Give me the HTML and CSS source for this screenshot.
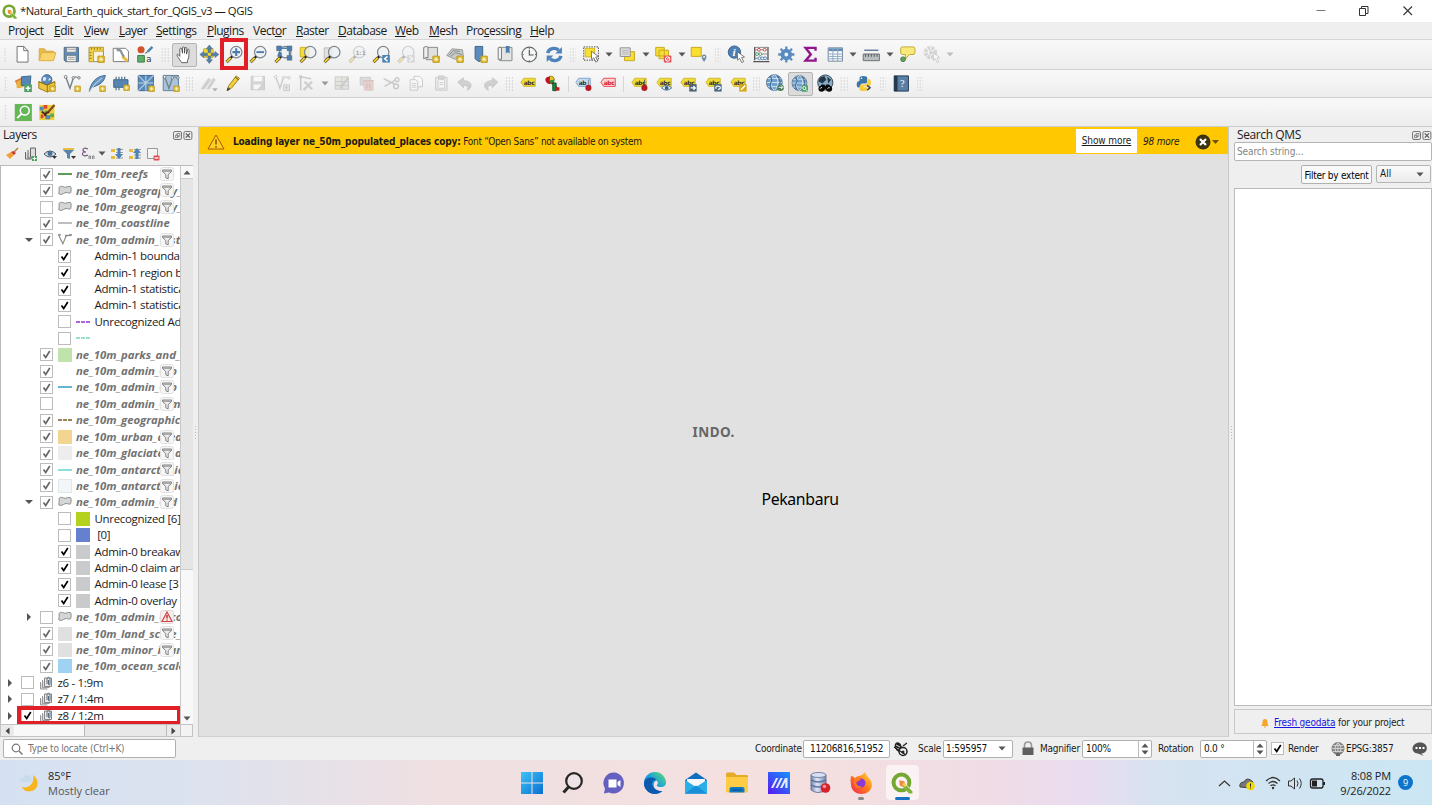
FILE: index.html
```html
<!DOCTYPE html>
<html lang="en">
<head>
<meta charset="utf-8">
<title>*Natural_Earth_quick_start_for_QGIS_v3 — QGIS</title>
<link rel="stylesheet" href="styles.css">
</head>
<body>
<svg class="defs" width="0" height="0">
<defs>
<linearGradient id="gBlue" x1="0" y1="0" x2="1" y2="1"><stop offset="0" stop-color="#3dc3f7"/><stop offset="1" stop-color="#0a6fd0"/></linearGradient>
<linearGradient id="gEdge" x1="0" y1="1" x2="1" y2="0"><stop offset="0" stop-color="#0c4fa8"/><stop offset=".5" stop-color="#1b9de2"/><stop offset="1" stop-color="#5fe06a"/></linearGradient>
<linearGradient id="gAsus" x1="0" y1="1" x2="1" y2="0"><stop offset="0" stop-color="#5a18f0"/><stop offset="1" stop-color="#1494ff"/></linearGradient>
<linearGradient id="gFox" x1="1" y1="0" x2="0" y2="1"><stop offset="0" stop-color="#ffe03a"/><stop offset=".5" stop-color="#ff7a1a"/><stop offset="1" stop-color="#f0205a"/></linearGradient>
<linearGradient id="gDb" x1="0" y1="0" x2="1" y2="0"><stop offset="0" stop-color="#7888ae"/><stop offset=".4" stop-color="#dfe7f7"/><stop offset="1" stop-color="#7484ac"/></linearGradient>
</defs>
<symbol id="star" viewBox="0 0 8 8"><rect x=".4" y=".4" width="7.2" height="7.2" rx="1" fill="#d6b025" stroke="#b8941c" stroke-width=".8"/><path d="M4 1.5v5M1.5 4h5M2.3 2.3l3.4 3.4M5.7 2.3 2.3 5.7" stroke="#fff6c2" stroke-width=".9"/></symbol>
<symbol id="mag" viewBox="0 0 20 20"><circle cx="12" cy="7.5" r="6" fill="#eef2f6" fill-opacity=".75" stroke="#7f878e" stroke-width="1.3"/><path d="M7.8 12 5.8 14" stroke="#222" stroke-width="2.4"/><path d="m6.2 13.500-4.400 4.500" stroke="#5b4a10" stroke-width="3.200"/><path d="m6.200 13.500-4.100 4.200" stroke="#f1ce3c" stroke-width="2"/></symbol>
<symbol id="tag" viewBox="0 0 20 20"><path d="M2 9 5 4.600h12.500v8.800H5z" fill="#f1dc36" stroke="#c5ac22" stroke-width=".8"/><text x="5" y="11.400" class="abc">abc</text></symbol>
<symbol id="globe" viewBox="0 0 20 20"><circle cx="9" cy="9" r="8.300" fill="#6f9fcb" stroke="#5a748c"/><path d="M9 .7C4 5 4 13 9 17.300M9 .7c5 4.300 5 12.300 0 16.600M1 9h16M2.300 4.700h13.400M2.300 13.300h13.400" fill="none" stroke="#dfe9f2" stroke-width=".9"/><path d="M4.500 3c2 1 2 4 .5 7s1 5 1 6M12 2c3 3 4 8 1 14" fill="none" stroke="#3c6d9e" stroke-width="1.200"/></symbol>
<symbol id="funnel" viewBox="0 0 14 14"><rect x=".5" y=".5" width="13" height="13" rx="2" fill="#f6f6f6" stroke="#e2e2e2"/><path d="M2.500 3h9v1.500L8.200 7.500v4.300l-2.400-1V7.500L2.500 4.500z" fill="#eee" stroke="#777" stroke-width=".9"/><path d="M3 4.200h8" stroke="#888"/></symbol>
<symbol id="poly" viewBox="0 0 16 14"><path d="M1 4c0-3 3-3 6-1.500C9 3.500 12 .5 14.500 2c1 1 .8 5 0 7-1.500 1.500-4-1-6.500 0-2 1-5 3-7 1.500C0 9 2 6.500 1 4z" fill="#d5d7d7" stroke="#7b7e80"/></symbol>
<symbol id="group" viewBox="0 0 14 14"><path d="M1.500 6v7h7M3.500 4v7.500h7" fill="#ddd" stroke="#999"/><path d="M5.500 2h7v8.500h-7z" fill="#e9e9e9" stroke="#858585"/><path d="M8 8V3.500c0-3 3-3 3 0V8c0 1.500-1.500 1.500-1.500 0V4" fill="none" stroke="#576b80"/></symbol>
<symbol id="check" viewBox="0 0 13 13"><path d="m3.500 6.500 2.200 3L9.800 3" fill="none" stroke="currentColor" stroke-width="1.700"/></symbol>
<symbol id="dockb" viewBox="0 0 20 9"><rect x=".5" y=".5" width="8" height="8" rx="1.500" fill="#eee" stroke="#777"/><path d="M4 2.500h2.800v2.800H4zM2.500 4.200h2.700v2.500H2.500z" fill="#eee" stroke="#777" stroke-width=".8"/><rect x="10.900" y=".5" width="8" height="8" rx="1.500" fill="#eee" stroke="#777"/><path d="m12.800 2.400 4.200 4.200m0-4.200-4.200 4.200" stroke="#555" stroke-width="1.200"/></symbol>
<symbol id="qgis" viewBox="0 0 20 20"><circle cx="9.500" cy="9.500" r="7.200" fill="none" stroke="#74a832" stroke-width="3.600"/><path d="m10.500 13 2.500-2.500 7 7-2.500 2.500z" fill="#fff"/><path d="m12 10.500 7.500 7v2h-3.200L10.500 13z" fill="#7eb238"/><path d="m7.500 7.500 4.500.8 1 2.700-2.500 2.500-2.500-1z" fill="#ef8a3d"/><path d="m11 10.500 2.500 2.500" stroke="#f4d04b" stroke-width="2.400"/></symbol>
<symbol id="cursor" viewBox="0 0 10 12"><path d="m1 0 .3 9 2.200-2 2.200 4.500 2-1L5.600 6.200l3-.5z" fill="#fff" stroke="#555" stroke-width=".8"/></symbol>
<symbol id="down" viewBox="0 0 8 5"><path d="M.5.5h7L4 4.500z" fill="currentColor"/></symbol>
<symbol id="vee" viewBox="0 0 20 20"><path d="m3 3 4.500 12L11 4.500q2-3 6 0" fill="none" stroke="#77838e" stroke-width="1.500"/><circle cx="3" cy="3" r="1.500" fill="#fff" stroke="#777"/><circle cx="11" cy="4" r="1.300" fill="#fff" stroke="#777"/><circle cx="17" cy="4" r="1.300" fill="#fff" stroke="#777"/></symbol>
</svg>

<header class="titlebar">
  <svg class="logo" viewBox="0 0 20 20"><use href="#qgis"/></svg>
  <span class="title">*Natural_Earth_quick_start_for_QGIS_v3 — QGIS</span>
  <svg class="winbtns" viewBox="0 0 108 16"><path d="M4.500 7.500h9" stroke="#777"/><path d="M47.500 5.500h6v7h-6zM49.500 5.500v-2h6.500v7h-2.500" fill="none" stroke="#333"/><path d="m91.500 3.500 8.500 8.500m0-8.500L91.500 12" stroke="#333" stroke-width="1.100"/></svg>
</header>

<nav class="menu">
  <span class="m1">Pro<u>j</u>ect</span><span class="m2"><u>E</u>dit</span><span class="m3"><u>V</u>iew</span><span class="m4"><u>L</u>ayer</span><span class="m5"><u>S</u>ettings</span><span class="m6"><u>P</u>lugins</span><span class="m7">Vect<u>o</u>r</span><span class="m8"><u>R</u>aster</span><span class="m9"><u>D</u>atabase</span><span class="m10"><u>W</u>eb</span><span class="m11"><u>M</u>esh</span><span class="m12">Pro<u>c</u>essing</span><span class="m13"><u>H</u>elp</span>
</nav>

<div class="toolbar bar1">
  <i class="grip g10"></i>
  <svg class="t" viewBox="0 0 20 20"><path d="M4.500 1.500h7l4.500 4.500v12H4.500z" fill="#fff" stroke="#6e6e6e"/><path d="M11.500 1.500V6H16" fill="none" stroke="#6e6e6e"/></svg>
  <svg class="t" viewBox="0 0 20 20"><path d="M1.500 16V4h5.500l2 2.500h7.500V9" fill="#e8bb4b" stroke="#d9a93c"/><path d="M1.500 16.500 4 8h15l-2.500 8.500z" fill="#f8d46b" stroke="#dcae3f"/></svg>
  <svg class="t" viewBox="0 0 20 20"><path d="M2.500 2.500h15v15H4l-1.500-1.500z" fill="#5e8cb8" stroke="#44698c"/><path d="M5 2.500h10v5H5zM5 11h10v6.500H5z" fill="#f3f3f3" stroke="#777" stroke-width=".8"/><path d="M6.500 13h7m-7 2h7M6 4.500h8" stroke="#999"/></svg>
  <svg class="t" viewBox="0 0 20 20"><path d="M2.500 2.500h15v15h-15z" fill="#f6f2df" stroke="#888"/><path d="M2.500 2.500h15v4H7v11H2.500z" fill="#f4d44b" stroke="#c7a22a"/><path d="M5 3v2m3-2v2m3-2v2m3-2v2M3 8h2m-2 3h2m-2 3h2" stroke="#8d7420"/><use href="#star" x="11" y="11" width="8" height="8"/></svg>
  <svg class="t" viewBox="0 0 20 20"><path d="M1.500 3.500h13l3 3v11h-16z" fill="#fff" stroke="#777"/><path d="m11 12 5.500 5" stroke="#e9bd43" stroke-width="3"/><path d="M5 5.500q4-1 5 2t3 5" fill="none" stroke="#8c969e" stroke-width="2.400"/></svg>
  <svg class="t" viewBox="0 0 20 20"><circle cx="5.500" cy="5" r="3.700" fill="#d3532f"/><path d="m12.500 7 5-5" stroke="#4e85b3" stroke-width="2.600"/><path d="M9.500 9.500q1-3.500 3.500-2.500Z" fill="#333"/><path d="M2 11h7v7H2z" fill="#5cae68" stroke="#3f7b48"/><text x="11" y="17.500" class="smalla">a</text></svg>
  <i class="grip g14"></i>
  <svg class="t on" viewBox="0 0 20 20"><path d="M7 18.500 3 12.500c-1-1.500-2-4 0-3l2 2V3.500c0-1.500 2-1.500 2.200 0L8 8V2c0-1.500 2-1.500 2.200 0v6l.6-5.500c.2-1.500 2-1.200 2 .2L12.500 9l1-4.500c.4-1.300 2-1 1.800.5-.5 5 .5 7-1.800 11v2.500z" fill="#fff" stroke="#444" stroke-width=".9"/></svg>
  <svg class="t" viewBox="0 0 20 20"><path d="M4 4h10v9H4z" fill="#f3d937" stroke="#caae25"/><path d="m10 0 3.200 4h-1.800v4h-2.800V4H6.800zm0 19.500L6.800 15.500h1.800v-4h2.800v4h1.800zM0 10l4-3.200v1.800h4v2.800H4v1.800zm20 0-4 3.200v-1.800h-4V8.600h4V6.800z" fill="#5480aa" stroke="#3b5f80" stroke-width=".5"/></svg>
  <span class="tw"><svg class="t" viewBox="0 0 20 20"><use href="#mag"/><path d="M12 3.500v8M8 7.500h8" stroke="#4c7cae" stroke-width="2.200"/></svg><b class="mark"></b></span>
  <svg class="t" viewBox="0 0 20 20"><use href="#mag"/><path d="M8 7.500h8" stroke="#4c7cae" stroke-width="2"/></svg>
  <svg class="t" viewBox="0 0 20 20"><use href="#mag"/><path d="M3 1h5v5H3zM14 1h5v5h-5zM14 11h5v5h-5zM5 8h3v4H4z" fill="#4d7eac" stroke="#375f84" stroke-width=".5"/><path d="M8 3.500h6M16.500 5v7" stroke="#4d7eac" stroke-width="1.500"/></svg>
  <svg class="t" viewBox="0 0 20 20"><path d="M1.500 2.500h9v10h-9z" fill="#f4dc31" stroke="#cbb020"/><use href="#mag"/></svg>
  <svg class="t" viewBox="0 0 20 20"><path d="M1.500 3h8v11h-8z" fill="#e2e2e2" stroke="#bbb"/><use href="#mag"/></svg>
  <svg class="t off" viewBox="0 0 20 20"><use href="#mag"/><text x="8" y="10.500" class="tiny">1:1</text></svg>
  <svg class="t" viewBox="0 0 20 20"><use href="#mag"/><path d="M11 10.500h8v8h-8z" fill="#4e83b5"/><path d="m16.500 12-3 2.500 3 2.500" fill="none" stroke="#fff" stroke-width="1.500"/></svg>
  <svg class="t off" viewBox="0 0 20 20"><use href="#mag"/><path d="M11 10.500h8v8h-8z" fill="#aaa"/><path d="m13.500 12 3 2.500-3 2.500" fill="none" stroke="#fff" stroke-width="1.500"/></svg>
  <svg class="t" viewBox="0 0 20 20"><path d="M4.500 2.500h12v13h-12z" fill="#dfe0e0" stroke="#858989"/><path d="M2 2.500q3-2 4.500 0v11q-2.500-1-4.500 1z" fill="#f0f0f0" stroke="#777"/><use href="#star" x="11" y="11" width="8" height="8"/></svg>
  <svg class="t" viewBox="0 0 20 20"><path d="M1 11 6.500 4l11 1 1 7-9 3z" fill="#c7caca" stroke="#999"/><path d="m3 11 5-5 7 .7M5 12l5-4 7 2" stroke="#858989" fill="none"/><use href="#star" x="11" y="11" width="8" height="8"/></svg>
  <svg class="t" viewBox="0 0 20 20"><path d="M4.500 1.500h8v14l-4 2-4-3z" fill="#5a8dbd" stroke="#3b6288"/><use href="#star" x="10" y="11" width="8" height="8"/></svg>
  <svg class="t" viewBox="0 0 20 20"><path d="M4 2.500h13v14H4z" fill="#e3e4e4" stroke="#858989"/><path d="M2.500 3q2-1.500 3.500 0v12H2.500z" fill="#f2f2f2" stroke="#777"/><path d="M10.500 1h4v8l-2-1.500-2 1.500z" fill="#4f7fae"/></svg>
  <svg class="t" viewBox="0 0 20 20"><circle cx="10" cy="10" r="7.700" fill="#f6f7f7" stroke="#676c70" stroke-width="1.200"/><path d="M10 5v5.500h4.500M10 3v1m0 12v1M3 10h1m12 0h1" fill="none" stroke="#555" stroke-width="1.200"/></svg>
  <svg class="t" viewBox="0 0 20 20"><path d="M3 8.500C4 3.500 11 2 14.500 5.500" fill="none" stroke="#4c83bc" stroke-width="3.500"/><path d="M18 2v7h-7zM2 18v-7h7z" fill="#4c83bc"/><path d="M17 11.500C16 16.500 9 18 5.500 14.500" fill="none" stroke="#4c83bc" stroke-width="3.500"/></svg>
  <i class="grip g12"></i>
  <svg class="t" viewBox="0 0 20 20"><path d="M2 2h15.500v14H2z" fill="none" stroke="#444" stroke-dasharray="1.500 1.200"/><path d="M3.500 3.500h10v9h-10z" fill="#f9df2e" stroke="#d0b41c"/><use href="#cursor" x="9" y="6" width="10" height="13"/></svg>
  <svg class="d" viewBox="0 0 8 5"><use href="#down"/></svg>
  <svg class="t" viewBox="0 0 20 20"><path d="M7 7h10.500v9.500H7z" fill="#f7dd36" stroke="#c6a71c"/><path d="M2.500 3h10.500v9H2.500z" fill="#e9e9e9" stroke="#888"/><path d="M4 5.500h7.500M4 7.500h7.500M4 9.500h7.500" stroke="#aaa"/></svg>
  <svg class="d" viewBox="0 0 8 5"><use href="#down"/></svg>
  <svg class="t" viewBox="0 0 20 20"><path d="M2 2.500h9v9H2zM5.500 5.500h10v9h-10z" fill="#f7dd36" stroke="#c6a71c"/><rect x="10.500" y="11" width="8" height="7.500" rx="1" fill="#e2535c"/><circle cx="14.500" cy="14.700" r="2.300" fill="none" stroke="#fff"/><path d="m13 16.500 3-3.600" stroke="#fff"/></svg>
  <svg class="d" viewBox="0 0 8 5"><use href="#down"/></svg>
  <svg class="t" viewBox="0 0 20 20"><path d="M1.500 2.500h10.500v9.500H1.500z" fill="#f9df2e" stroke="#c6a71c"/><path d="M15 18c-2-3.500-2.500-4-2.500-5.500a2.500 2.500 0 0 1 5 0c0 1.500-.5 2-2.500 5.500z" fill="#6f8ea8"/><circle cx="15" cy="12.500" r="1" fill="#fff"/></svg>
  <i class="grip g12"></i>
  <svg class="t" viewBox="0 0 20 20"><circle cx="8" cy="7.500" r="6.500" fill="#4f7fb3" stroke="#3c648e"/><text x="6" y="12" class="info">i</text><use href="#cursor" x="10" y="7" width="10" height="12"/></svg>
  <svg class="t" viewBox="0 0 20 20"><path d="M3 2v14M17 2v14M1.500 17.500h17" stroke="#555" stroke-width="1.400"/><path d="M3 2.500h14M3 5h14M3 9.500h14M3 14h14" stroke="#888"/><g fill="#fff"><circle cx="7.500" cy="5" r="1.500" stroke="#c54444"/><circle cx="13.500" cy="5" r="1.500" stroke="#c54444"/><circle cx="5.500" cy="9.500" r="1.500" stroke="#4d9a65"/><circle cx="9" cy="9.500" r="1.500" stroke="#4d9a65"/><circle cx="8" cy="14" r="1.500" stroke="#5481ad"/><circle cx="11" cy="14" r="1.500" stroke="#5481ad"/><circle cx="14" cy="14" r="1.500" stroke="#5481ad"/></g></svg>
  <svg class="t" viewBox="0 0 20 20"><circle cx="10" cy="10" r="4" fill="none" stroke="#578bc0" stroke-width="4"/><path d="M10 1.500v3M10 15.500v3M1.500 10h3M15.500 10h3M4 4l2 2M14 14l2 2M16 4l-2 2M4 16l2-2" stroke="#578bc0" stroke-width="2.400"/></svg>
  <svg class="t" viewBox="0 0 20 20"><path d="M15.500 6V3H5l5.500 7L5 16.500h10.500v-3" fill="none" stroke="#8f168f" stroke-width="2.500"/></svg>
  <svg class="t" viewBox="0 0 20 20"><path d="M2.500 3h15v14h-15z" fill="#fff" stroke="#6c8198"/><path d="M3 3.500h14v3H3z" fill="#608db9"/><path d="M2.500 9.500h15M2.500 12h15M2.500 14.500h15M7.500 3v14M12.500 3v14" stroke="#8aa6c1"/></svg>
  <svg class="d" viewBox="0 0 8 5"><use href="#down"/></svg>
  <svg class="t" viewBox="0 0 20 20"><path d="M2.500 5.500h15" stroke="#49698e" stroke-width="1.300"/><path d="M1.500 9.500h17v7h-17z" fill="#b9bec1" stroke="#686e73"/><path d="M4 9.500v3m3-3v3m3-3v3m3-3v3m3-3v3" stroke="#555"/></svg>
  <svg class="d" viewBox="0 0 8 5"><use href="#down"/></svg>
  <svg class="t" viewBox="0 0 20 20"><path d="M5 2h11q2 0 2 2v4q0 2-2 2h-4l-4 5V10H5Q3 10 3 8V4q0-2 2-2z" fill="#f8ea7a" stroke="#bfa536"/><circle cx="5.500" cy="15" r="2.500" fill="#65a45d" stroke="#447d44"/></svg>
  <svg class="t off" viewBox="0 0 20 20"><circle cx="8" cy="8" r="5" fill="none" stroke="#999" stroke-width="4" stroke-dasharray="3 1"/><path d="m7 5 4 3-4 3z" fill="#888"/><use href="#cursor" x="10" y="8" width="9" height="11"/></svg>
  <svg class="d off" viewBox="0 0 8 5"><use href="#down"/></svg>
</div>

<div class="toolbar bar2">
  <i class="grip g11"></i>
  <svg class="t" viewBox="0 0 20 20"><path d="m1 7 7-3 4 8-7 3z" fill="#dd7b3b"/><path d="m3 8 7-3v9l-7 1z" fill="#e8b33a"/><path d="m8 3 10-1-1 11-9-1z" fill="#5487b8" stroke="#3f678c"/><path d="M11 11h8v8h-8z" fill="#4fa064"/><path d="M15 12.500v5M12.500 15h5" stroke="#fff" stroke-width="1.500"/></svg>
  <svg class="t" viewBox="0 0 20 20"><path d="m1 8 9 3.500 8-3.500v6.500l-8 4.500-9-4z" fill="#edc53e" stroke="#9f7c19"/><circle cx="9.500" cy="6" r="5.300" fill="#5a8cbd" stroke="#37618b"/><path d="m6 3 3 1-1 3-3 0zm6 1 2 2-3 1z" fill="#e7edf1"/><path d="m1 8 9 3.500V19M18 8l-8 3.500" fill="none" stroke="#94720f"/><use href="#star" x="12" y="12" width="7" height="7"/></svg>
  <svg class="t" viewBox="0 0 20 20"><use href="#vee"/><use href="#star" x="12" y="12" width="7" height="7"/></svg>
  <svg class="t" viewBox="0 0 20 20"><path d="M1.500 18.500C3 9 9 2 18.500 1.500 17 8 14 11 4.500 14z" fill="#6595c1" stroke="#416d96"/><path d="M1.500 18.500Q7 10 15 4" stroke="#d9e4ed" fill="none"/><use href="#star" x="12" y="12" width="7" height="7"/></svg>
  <svg class="t" viewBox="0 0 20 20"><path d="M2 6h15v8H2z" fill="#5384b2" stroke="#3d6489"/><path d="M4.500 6V3m3 3V3m3 3V3m3 3V3m-9 11v3m3-3v3" stroke="#55718b" stroke-width="1.300"/><use href="#star" x="12" y="11" width="7" height="7"/></svg>
  <svg class="t" viewBox="0 0 20 20"><path d="M1.500 1.500h16v16h-16z" fill="#588bbc" stroke="#3f678f"/><path d="M9.500 1.500v16M1.500 9.500h16M1.500 1.500l8 8M9.500 9.500l8-8M1.500 17.500l8-8" stroke="#bfd3e4" stroke-width="1.100"/><use href="#star" x="12" y="12" width="7" height="7"/></svg>
  <svg class="t" viewBox="0 0 20 20"><path d="M1.500 1.500h16v16h-16z" fill="#a9c5dd" stroke="#5d7f9d"/><use href="#vee"/><use href="#star" x="12" y="12" width="7" height="7"/></svg>
  <i class="grip g13"></i>
  <svg class="t off" viewBox="0 0 20 20"><path d="M2 16 10 4l3 2-7 10zM8 16l7-12 3 2-7 10z" fill="#888"/><path d="M14 15h6l-3 3.500z" fill="#333"/></svg>
  <svg class="t" viewBox="0 0 20 20"><path d="m3.500 17.500 1.500-5L13 2l3.500 2.500-8.500 10.500z" fill="#f2cf38" stroke="#9e8025"/><path d="m12 3.500 3.500 2.500M3.500 17.500l1-3 1.700 1.200z" stroke="#444" fill="#444"/></svg>
  <svg class="t off" viewBox="0 0 20 20"><path d="M2.500 2.500h14v14h-14z" fill="#999" stroke="#777"/><path d="M5 2.500h9v5H5zM5 11h8v5H5z" fill="#fff"/><path d="m10 17 6-7" stroke="#888" stroke-width="2"/></svg>
  <svg class="t off" viewBox="0 0 20 20"><use href="#vee"/><path d="M11.500 11.500h6v6h-6z" fill="#ddd" stroke="#777"/><path d="M14.500 12.500v4m-2-2h4" stroke="#777"/></svg>
  <svg class="t off" viewBox="0 0 20 20"><path d="M3 17V3l11 2" fill="none" stroke="#777" stroke-width="1.500"/><path d="M1.500 1.500h3v3h-3z" fill="#777"/><path d="m6 17 9-9M7 8l8 8" stroke="#888" stroke-width="2.400"/></svg>
  <svg class="d mid" viewBox="0 0 8 5"><use href="#down"/></svg>
  <svg class="t off" viewBox="0 0 20 20"><path d="M2.500 3h14v13h-14z" fill="#c9c9b9" stroke="#777"/><path d="M2.500 8h14m-14 4h14m-7-9v13" stroke="#777"/><path d="m8 15 8-11" stroke="#777" stroke-width="2"/></svg>
  <svg class="t off" viewBox="0 0 20 20"><path d="M2.500 3.500h11v8h-11z" fill="#aaa" stroke="#777"/><path d="M6 8h10v9H7z" fill="#d88" stroke="#a77"/><path d="M5 7h12M9.500 10v5m3-5v5" stroke="#966" stroke-width="1.500"/></svg>
  <svg class="t off" viewBox="0 0 20 20"><path d="m2 5 12 6M3 13l12-7" stroke="#777" stroke-width="1.600"/><circle cx="15" cy="13" r="2.500" fill="none" stroke="#777" stroke-width="1.500"/><circle cx="16" cy="6" r="2" fill="none" stroke="#777" stroke-width="1.500"/></svg>
  <svg class="t off" viewBox="0 0 20 20"><path d="M7.500 2.500h6l3 3v8h-9z" fill="#fff" stroke="#777"/><path d="M3.500 6h6l2 2v9h-8z" fill="#fff" stroke="#777"/><path d="M5 10h5m-5 2h5m-5 2h5" stroke="#888"/></svg>
  <svg class="t off" viewBox="0 0 20 20"><path d="M4 3.500h12v13.500H4z" fill="#ddd" stroke="#777"/><path d="M6.500 6h7v9h-7z" fill="#fff" stroke="#888"/><path d="M7 2h6v3H7zM8 9h4m-4 2h4" fill="#999" stroke="#777"/></svg>
  <svg class="t off" viewBox="0 0 20 20"><path d="M2 8.500 8 4v3c10 0 10 8 4 10 2-4 0-5-4-5v2.500z" fill="#888" stroke="#777"/></svg>
  <svg class="t off" viewBox="0 0 20 20"><path d="M18 8.500 12 4v3C2 7 2 15 8 17c-2-4 0-5 4-5v2.500z" fill="#888" stroke="#777"/></svg>
  <i class="grip g13"></i>
  <svg class="t up" viewBox="0 0 20 20"><use href="#tag"/></svg>
  <svg class="t" viewBox="0 0 20 20"><path d="M7 7V2.500q5-1 5 4Z" fill="#e7c52d" stroke="#8f7b18"/><path d="M2.500 6q1-4 5-3L7 7l3 3q-6 2-7.500-4z" fill="#c1121d"/><path d="m7 7 5-1q1 4-3 5z" fill="#1e9b3d"/><path d="m10 9 5 6" stroke="#a11" stroke-width="2"/><path d="M10.500 9.500h3.500v8h-3.500z" fill="#15883a" stroke="#0c5425"/><path d="M14 14h3.500v3.500H14z" fill="#bc1921"/></svg>
  <i class="sep"></i>
  <svg class="t up" viewBox="0 0 20 20"><path d="M2 9 5 4.600h12.500v8.800H5z" fill="#c5dbf1" stroke="#78a2cd"/><text x="5" y="11.400" class="abc">ab</text><path d="M15.500 6v7" stroke="#888"/><circle cx="15.500" cy="15" r="3.300" fill="#b51c28"/></svg>
  <svg class="t up" viewBox="0 0 20 20"><path d="M2 9 5 4.600h12.500v8.800H5z" fill="#ffd2d2" stroke="#e6434c"/><text x="5" y="11.400" class="abc red">abc</text></svg>
  <i class="sep"></i>
  <svg class="t up" viewBox="0 0 20 20"><use href="#tag"/><path d="M15.500 6v7" stroke="#555"/><circle cx="15.500" cy="15" r="3.300" fill="#b51c28"/></svg>
  <svg class="t up" viewBox="0 0 20 20"><use href="#tag"/><path d="M7 15q5-5.500 11 0-6 5-11 0z" fill="#eaf1f8" stroke="#446b91"/><circle cx="12.500" cy="15" r="2" fill="#355b82"/></svg>
  <svg class="t up" viewBox="0 0 20 20"><use href="#tag"/><path d="M11 11h8v8h-8z" fill="#4d6472"/><path d="M12.500 15h5m-2-2 2 2-2 2" stroke="#fff" fill="none" stroke-width="1.400"/></svg>
  <svg class="t up" viewBox="0 0 20 20"><use href="#tag"/><path d="M11 11h8v8h-8z" fill="#4d6880"/><path d="M13 16q-1-3 2-3 3 0 2.500 2.500L15 17" fill="none" stroke="#fff" stroke-width="1.300"/></svg>
  <svg class="t up" viewBox="0 0 20 20"><use href="#tag"/><path d="M11 11h8v8h-8z" fill="#d6a918"/><path d="m13 17 4.500-4.500" stroke="#fff" stroke-width="1.700"/></svg>
  <i class="grip g13"></i>
  <svg class="t" viewBox="0 0 20 20"><use href="#globe"/><circle cx="15.500" cy="14.500" r="3.500" fill="#487c58"/><path d="M13.500 14h4m-1.500-2 2 2-2 2" fill="none" stroke="#fff"/></svg>
  <svg class="t on" viewBox="0 0 20 20"><use href="#globe"/><rect x="11.500" y="11.500" width="7" height="7" rx="1" fill="#4ca06a"/><circle cx="14.500" cy="14.500" r="1.700" fill="none" stroke="#fff"/><path d="m16 16 2 2" stroke="#fff"/></svg>
  <svg class="t" viewBox="0 0 20 20"><circle cx="10" cy="9" r="8" fill="#87adc9" stroke="#345"/><path d="m4 4 5-2 2 4-4 4-4-2zM12 3l4 3-3 4z" fill="#253746"/><path d="m3 16 3-5h3l1 2 1-2h3l3 5z" fill="#080808"/><circle cx="6" cy="15.500" r="3.200" fill="#080808"/><circle cx="14" cy="15.500" r="3.200" fill="#080808"/><path d="M4.500 15.500q1-2 2-1m6 1q1-2 2-1" stroke="#fff" fill="none"/></svg>
  <i class="grip g14"></i>
  <svg class="t" viewBox="0 0 20 20"><path d="M4 9V8h6V7H5q-3 0-3 4t3 3h1v-2q0-2 2-2h3q2 0 2-2V4q0-2-4-2T5 4v3" fill="#3c75a8"/><path d="M15 6h1q2 1 2 4 0 4-3 4h-5v1h4v2q0 2-4 2t-4-2v-3q0-2 2-2h4q2 0 2-2z" fill="#f7cc3c" transform="translate(-1 -1)"/><circle cx="7" cy="4.500" r=".8" fill="#fff"/><path d="m13 12 3 2.500-3 2.500" fill="none" stroke="#444" stroke-width="1.600"/></svg>
  <i class="grip g12"></i>
  <svg class="t" viewBox="0 0 20 20"><path d="M2.500 2h15v16h-15z" fill="#587fa6" stroke="#243a4f"/><path d="M2.500 2H6v16H2.500z" fill="#26384a"/><text x="8.700" y="14" class="help">?</text></svg>
  <i class="grip g12"></i>
</div>

<div class="toolbar bar3">
  <i class="grip g11"></i>
  <svg class="t" viewBox="0 0 20 20"><path d="M1 1h18v18H1z" fill="#65b657"/><circle cx="11.500" cy="8" r="4.700" fill="none" stroke="#fff" stroke-width="1.600"/><path d="m8 11.500-4.500 4.500" stroke="#fff" stroke-width="2"/></svg>
  <svg class="t" viewBox="0 0 20 20"><path d="M1.500 2h16v16h-16z" fill="#f0cf3d"/><path d="M2 4h4v4H2zM8 13h5v4H8z" fill="#5585b5"/><path d="M6 2h4v4H6zM3 12h3v4H3z" fill="#d84b31"/><path d="M7 8h3v4H7zM13 11h4v4h-4z" fill="#5eaa54"/><path d="m17.500 2-7 8" stroke="#884714" stroke-width="2.400"/><path d="M4 9q4 2 4 5 0-5 4-4" fill="none" stroke="#4f2d18" stroke-width="2"/></svg>
</div>

<main class="work">
  <aside class="layers">
    <div class="dockhead"><span>Layers</span><svg class="dockbtns" viewBox="0 0 20 9"><use href="#dockb"/></svg></div>
    <div class="ltools">
      <svg viewBox="0 0 14 14"><path d="m1 8 5-3 3 3-4 4z" fill="#f0a038"/><path d="m6 5 3 3 2-2-3-2z" fill="#c33"/><path d="m9 5 4-4" stroke="#b67b37" stroke-width="1.500"/></svg>
      <svg viewBox="0 0 14 14"><path d="M1.500 5v7h6M4 3v8h5M6.500 1h5v9h-5z" fill="#ddd" stroke="#666"/><path d="M8 9h5v5H8z" fill="#4aa05d"/><path d="M10.500 9.500v4m-2-2h4" stroke="#fff"/></svg>
      <svg viewBox="0 0 14 14"><path d="M1 7q6-6 12 0-6 6-12 0z" fill="#dde6ed" stroke="#456"/><circle cx="7" cy="6.500" r="2.500" fill="#4b7298"/><path d="M9 9h5l-2.500 3z" fill="#333"/></svg>
      <svg viewBox="0 0 14 14"><path d="M1 1h11v2L8 7v5l-3-1V7L1 3z" fill="#5684ae"/><path d="M1 1h11v2H1z" fill="#e8bd3c"/><path d="M9 9h5l-2.500 3z" fill="#333"/></svg>
      <svg viewBox="0 0 14 14"><path d="M7 2Q2 0 2 3q0 2 3 2-4 0-3.500 2.500Q3 10 7 8" fill="none" stroke="#7b5588" stroke-width="1.200"/><path d="M8 12V9h1.500v3m2 0V9H13v3" fill="none" stroke="#888"/></svg>
      <svg class="lc" viewBox="0 0 8 5"><use href="#down"/></svg>
      <svg class="nr" viewBox="0 0 14 14"><path d="M1 2h4v3H1zM1 9h4v3H1z" fill="#e8bd3c"/><path d="M6 2.500h7M6 5.500h7M6 11h7" stroke="#999"/><path d="M7.500 1h3v6H13l-4 5-4-5h2.500z" fill="#4d83b5"/></svg>
      <svg class="nr" viewBox="0 0 14 14"><path d="M1 2h4v3H1zM1 9h4v3H1z" fill="#e8bd3c"/><path d="M6 2.500h7M6 8h7M6 11h7" stroke="#999"/><path d="M7.500 12h3V6H13L9 1 5 6h2.500z" fill="#4d83b5"/></svg>
      <svg viewBox="0 0 14 14"><path d="M1.500 1.500h10v10h-10z" fill="#f4f4f4" stroke="#999"/><rect x="7.500" y="8.500" width="6" height="5" rx="1" fill="#df4b53"/><path d="M8.500 11h4" stroke="#fff" stroke-width="1.300"/></svg>
    </div>
    <div class="treebox">
      <div class="tree">
        <div class="r l1"><i class="ar"></i><b class="cb g"><svg><use href="#check"/></svg></b><i class="ic"><i class="ln" style="background:#5e9a5a"></i></i><em>ne_10m_reefs</em><svg class="fu"><use href="#funnel"/></svg></div>
        <div class="r l1"><i class="ar"></i><b class="cb g"><svg><use href="#check"/></svg></b><i class="ic"><svg class="po"><use href="#poly"/></svg></i><em>ne_10m_geography_</em><svg class="fu"><use href="#funnel"/></svg></div>
        <div class="r l1"><i class="ar"></i><b class="cb g"></b><i class="ic"><svg class="po"><use href="#poly"/></svg></i><em>ne_10m_geography_</em><svg class="fu"><use href="#funnel"/></svg></div>
        <div class="r l1"><i class="ar"></i><b class="cb g"><svg><use href="#check"/></svg></b><i class="ic"><i class="ln" style="background:#bdbdbd"></i></i><em>ne_10m_coastline</em></div>
        <div class="r l1"><i class="ar open"></i><b class="cb g"><svg><use href="#check"/></svg></b><i class="ic"><svg class="po" viewBox="0 0 16 14"><path d="m1 2 4.500 9.500L9 3q1-2 5.500-1" fill="none" stroke="#888" stroke-width="1.300"/><path d="M0 1h3M8 2h2M13 1h3" stroke="#888" stroke-width="2"/></svg></i><em>ne_10m_admin_1_st</em><svg class="fu"><use href="#funnel"/></svg></div>
        <div class="r l2"><b class="cb"><svg><use href="#check"/></svg></b><i class="ic"></i><span>Admin-1 bounda</span></div>
        <div class="r l2"><b class="cb"><svg><use href="#check"/></svg></b><i class="ic"></i><span>Admin-1 region b</span></div>
        <div class="r l2"><b class="cb"><svg><use href="#check"/></svg></b><i class="ic"></i><span>Admin-1 statistica</span></div>
        <div class="r l2"><b class="cb"><svg><use href="#check"/></svg></b><i class="ic"></i><span>Admin-1 statistica</span></div>
        <div class="r l2"><b class="cb"></b><i class="ic"><i class="ds" style="color:#a652d6"></i></i><span>Unrecognized Ad</span></div>
        <div class="r l2"><b class="cb"></b><i class="ic"><i class="ds" style="color:#8fdcc4"></i></i></div>
        <div class="r l1"><i class="ar"></i><b class="cb g"><svg><use href="#check"/></svg></b><i class="ic"><i class="sw" style="background:#bfe3ab"></i></i><em>ne_10m_parks_and_</em></div>
        <div class="r l1"><i class="ar"></i><b class="cb g"><svg><use href="#check"/></svg></b><i class="ic"></i><em>ne_10m_admin_0_b</em><svg class="fu"><use href="#funnel"/></svg></div>
        <div class="r l1"><i class="ar"></i><b class="cb g"><svg><use href="#check"/></svg></b><i class="ic"><i class="ln" style="background:#62b5d6"></i></i><em>ne_10m_admin_0_b</em><svg class="fu"><use href="#funnel"/></svg></div>
        <div class="r l1"><i class="ar"></i><b class="cb g"></b><i class="ic"></i><em>ne_10m_admin_0_m</em><svg class="fu"><use href="#funnel"/></svg></div>
        <div class="r l1"><i class="ar"></i><b class="cb g"><svg><use href="#check"/></svg></b><i class="ic"><i class="ds" style="color:#8b7844"></i></i><em>ne_10m_geographic</em></div>
        <div class="r l1"><i class="ar"></i><b class="cb g"><svg><use href="#check"/></svg></b><i class="ic"><i class="sw" style="background:#f1d591"></i></i><em>ne_10m_urban_area</em><svg class="fu"><use href="#funnel"/></svg></div>
        <div class="r l1"><i class="ar"></i><b class="cb g"><svg><use href="#check"/></svg></b><i class="ic"><i class="sw" style="background:#ededed"></i></i><em>ne_10m_glaciated_a</em><svg class="fu"><use href="#funnel"/></svg></div>
        <div class="r l1"><i class="ar"></i><b class="cb g"><svg><use href="#check"/></svg></b><i class="ic"><i class="ln" style="background:#8adede"></i></i><em>ne_10m_antarctic_ic</em><svg class="fu"><use href="#funnel"/></svg></div>
        <div class="r l1"><i class="ar"></i><b class="cb g"><svg><use href="#check"/></svg></b><i class="ic"><i class="sw pale"></i></i><em>ne_10m_antarctic_ic</em><svg class="fu"><use href="#funnel"/></svg></div>
        <div class="r l1"><i class="ar open"></i><b class="cb g"><svg><use href="#check"/></svg></b><i class="ic"><svg class="po"><use href="#poly"/></svg></i><em>ne_10m_admin_0_d</em><svg class="fu"><use href="#funnel"/></svg></div>
        <div class="r l2"><b class="cb"></b><i class="ic"><i class="sw" style="background:#b4d21d"></i></i><span>Unrecognized [6]</span></div>
        <div class="r l2"><b class="cb"></b><i class="ic"><i class="sw" style="background:#6480cf"></i></i><span>&nbsp;[0]</span></div>
        <div class="r l2"><b class="cb"><svg><use href="#check"/></svg></b><i class="ic"><i class="sw" style="background:#c8cacc"></i></i><span>Admin-0 breakaw</span></div>
        <div class="r l2"><b class="cb"><svg><use href="#check"/></svg></b><i class="ic"><i class="sw" style="background:#c8cacc"></i></i><span>Admin-0 claim ar</span></div>
        <div class="r l2"><b class="cb"><svg><use href="#check"/></svg></b><i class="ic"><i class="sw" style="background:#c8cacc"></i></i><span>Admin-0 lease [3</span></div>
        <div class="r l2"><b class="cb"><svg><use href="#check"/></svg></b><i class="ic"><i class="sw" style="background:#c8cacc"></i></i><span>Admin-0 overlay</span></div>
        <div class="r l1"><i class="ar shut"></i><b class="cb g"></b><i class="ic"><svg class="po"><use href="#poly"/></svg></i><em>ne_10m_admin_0_co</em><svg class="fu" viewBox="0 0 14 14"><rect x=".5" y=".5" width="13" height="13" rx="2" fill="#f6eeee" stroke="#e2d8d8"/><path d="M7 2 12 11.500H2z" fill="#fbe9e9" stroke="#c9474b" stroke-width="1.200"/><path d="M7 5v3.500m0 1v1" stroke="#b22" stroke-width="1.400"/></svg></div>
        <div class="r l1"><i class="ar"></i><b class="cb g"><svg><use href="#check"/></svg></b><i class="ic"><i class="sw" style="background:#e0e0e0"></i></i><em>ne_10m_land_scale_</em><svg class="fu"><use href="#funnel"/></svg></div>
        <div class="r l1"><i class="ar"></i><b class="cb g"><svg><use href="#check"/></svg></b><i class="ic"><i class="sw" style="background:#e0e0e0"></i></i><em>ne_10m_minor_islan</em><svg class="fu"><use href="#funnel"/></svg></div>
        <div class="r l1"><i class="ar"></i><b class="cb g"><svg><use href="#check"/></svg></b><i class="ic"><i class="sw" style="background:#a0d2f1"></i></i><em>ne_10m_ocean_scale</em></div>
        <div class="r l0"><i class="ar shut"></i><b class="cb"></b><i class="ic"><svg class="gr"><use href="#group"/></svg></i><span>z6 - 1:9m</span></div>
        <div class="r l0"><i class="ar shut"></i><b class="cb"></b><i class="ic"><svg class="gr"><use href="#group"/></svg></i><span>z7 / 1:4m</span></div>
        <div class="r l0"><i class="ar shut"></i><b class="cb"><svg><use href="#check"/></svg></b><i class="ic"><svg class="gr"><use href="#group"/></svg></i><span>z8 / 1:2m</span><b class="hl"></b></div>
      </div>
      <div class="vs"><i class="cap"><svg viewBox="0 0 8 5"><path d="M.5 4.500h7L4 .5z" fill="#555"/></svg></i><i class="vthumb"></i><i class="vtrack"></i><i class="cap"><svg viewBox="0 0 8 5"><use href="#down"/></svg></i></div>
    </div>
    <div class="hs"><svg viewBox="0 0 5 8"><path d="M4.500.5v7L.5 4z" fill="#444"/></svg><i class="ht"></i><i class="hthumb"></i><svg viewBox="0 0 5 8"><path d="M.5.5v7l4-3.500z" fill="#444"/></svg><i class="corner"></i></div>
  </aside>
  <div class="split"><i></i></div>
  <section class="canvas">
    <div class="msg">
      <svg class="warn" viewBox="0 0 18 16"><path d="M9 1 17 15H1z" fill="#ffd020" stroke="#a85a00"/><path d="M9 5.500v5m0 1.500v1.500" stroke="#7c4300" stroke-width="1.400"/></svg>
      <span class="mt"><b>Loading layer ne_50m_populated_places copy:</b> Font “Open Sans” not available on system</span>
      <span class="show">Show more</span><span class="more">98 more</span>
      <svg class="mx" viewBox="0 0 24 16"><circle cx="8" cy="8" r="7.500" fill="#3c3310"/><path d="m5 5 6 6m0-6-6 6" stroke="#fff" stroke-width="2.200"/><path d="M17 6h7l-3.500 4z" fill="#6b5414"/></svg>
    </div>
    <div class="map"><span class="indo">INDO.</span><span class="peka">Pekanbaru</span></div>
  </section>
  <div class="split s2"><i></i></div>
  <aside class="qms">
    <div class="dockhead"><span>Search QMS</span><svg class="dockbtns" viewBox="0 0 20 9"><use href="#dockb"/></svg></div>
    <div class="inp">Search string...</div>
    <div class="frow"><span class="btn">Filter by extent</span><span class="combo">All<svg viewBox="0 0 8 5"><use href="#down"/></svg></span></div>
    <div class="list"></div>
    <div class="news"><svg viewBox="0 0 10 10"><path d="M1 8q1.500-1 1.500-4 0-3 2.500-3t2.500 3q0 3 1.500 4zM4 8.500h2v1H4z" fill="#f3a72e"/></svg><span><u>Fresh geodata</u> for your project</span></div>
  </aside>
</main>

<footer class="status">
  <div class="loc"><svg viewBox="0 0 12 12"><circle cx="5" cy="5" r="3.800" fill="none" stroke="#777" stroke-width="1.200"/><path d="m8 8 3.500 3.500" stroke="#777" stroke-width="1.500"/></svg>Type to locate (Ctrl+K)</div>
  <span class="s-coord">Coordinate</span><span class="box b-coord">11206816,51952</span>
  <svg class="bug" viewBox="0 0 16 16"><ellipse cx="5.500" cy="6" rx="3.500" ry="5" transform="rotate(-25 5.500 6)" fill="#222"/><path d="m3 4 4 2M3 7l5 2M8 5l5-4M9 7l4-2" stroke="#ddd"/><circle cx="10" cy="10.500" r="4" fill="#eee" stroke="#222" stroke-width="1.500"/><path d="m1 6 12 8M10 5l4-3" stroke="#222" stroke-width="1.200"/><circle cx="10" cy="11" r="1.500" fill="#222"/></svg>
  <span class="s-scale">Scale</span><span class="box b-scale">1:595957<svg viewBox="0 0 8 5"><use href="#down"/></svg></span>
  <svg class="lock" viewBox="0 0 12 15"><path d="M2.500 7V4.500q0-3.500 3.500-3.500t3.500 3.500V7" fill="none" stroke="#999" stroke-width="1.600"/><path d="M.5 6.500h11V14H.5z" fill="#606060"/></svg>
  <span class="s-mag">Magnifier</span><span class="box b-mag">100%<i class="spin"><svg viewBox="0 0 8 12"><path d="M.5 4.500h7L4 .5zM.5 7.500h7L4 11.500z" fill="#555"/></svg></i></span>
  <span class="s-rot">Rotation</span><span class="box b-rot">0.0 °<i class="spin"><svg viewBox="0 0 8 12"><path d="M.5 4.500h7L4 .5zM.5 7.500h7L4 11.500z" fill="#555"/></svg></i></span>
  <b class="cb rend"><svg><use href="#check"/></svg></b><span class="s-rend">Render</span>
  <svg class="crs" viewBox="0 0 14 14"><circle cx="7" cy="6.500" r="6" fill="#888" stroke="#777"/><path d="M7 .5v12M1 6.500h12M2 3.500h10M2 9.500h10M7 .5q-6 6 0 12M7 .5q6 6 0 12" fill="none" stroke="#ddd" stroke-width=".8"/><path d="M5 10.500h4V14H5z" fill="#666"/></svg>
  <span class="s-epsg">EPSG:3857</span>
  <svg class="chat" viewBox="0 0 16 16"><path d="M8 1.500c9 0 9 11 1 11l3 2.500-6-2.500c-8-.5-7-11 2-11z" fill="#555"/><path d="M3.500 7h2m1.500 0h2m1.500 0h2" stroke="#fff" stroke-width="2"/></svg>
</footer>

<div class="taskbar">
  <svg class="moon" viewBox="0 0 22 22"><path d="M15 3c6 4 6 12 1 15-5 3-11 1-12-3 6 2 13-3 11-12z" fill="#f8b51d"/><path d="M2 10q-1-4 3-4 2-5 7-2 3 2 1 6z" fill="#c8dced"/></svg>
  <div class="wx"><span>85°F</span><span class="wc">Mostly clear</span></div>
  <div class="apps">
    <svg viewBox="0 0 24 24"><path d="M1 1h10.500v10.500H1zM12.500 1H23v10.500H12.500zM1 12.500h10.500V23H1zM12.500 12.500H23V23H12.500z" fill="url(#gBlue)"/></svg>
    <svg viewBox="0 0 24 24"><circle cx="13" cy="10" r="7.800" fill="#eee3e5" stroke="#262626" stroke-width="2.200"/><path d="m7.500 16-5 5.500" stroke="#262626" stroke-width="3"/></svg>
    <svg viewBox="0 0 24 24"><path d="M12 1.500a10.500 10.500 0 1 1-5 20L2 22.500l1-5a10.500 10.500 0 0 1 9-16z" fill="#655fc1"/><path d="M6.500 8.500h8v8h-8zM15.500 11l3-2v7l-3-2z" fill="#fff"/></svg>
    <svg viewBox="0 0 24 24"><circle cx="12" cy="12" r="11" fill="url(#gEdge)"/><path d="M1 12C2 6 12 5 13 9c-4 0-5 4-3 7s7 4 11 2C16 26 1 24 1 12z" fill="#0d59ae"/><path d="M13.500 9.500c2 1.500 1.500 3.500.5 4.500s2 2.500 5 2 4-2.500 4-4l2 5-3 2.500c-5 1.500-10-.5-11-3.500s0-5.500 2.500-6.500z" fill="#f2e1e0"/></svg>
    <svg viewBox="0 0 24 24"><path d="M1 9 12 1.500 23 9v13.500H1z" fill="#106ebd"/><path d="M3 8h18v8H3z" fill="#f5f8fa"/><path d="m1 9 11 7L23 9v13.500H1z" fill="#2caee9"/><path d="m1 22.500 11-8 11 8z" fill="#188fd9"/></svg>
    <svg viewBox="0 0 24 24"><path d="M1 3q0-1.500 1.500-1.500H9L11.500 4H22q1 0 1 1.500V21H1z" fill="#e5aa26"/><path d="M1 6h22v14q0 1.500-1.500 1.500h-19Q1 21.500 1 20z" fill="#ffcd45"/><path d="M4.500 21.500V18q0-2 2-2h11q2 0 2 2v3.500z" fill="#1278c3"/><path d="M7 19h10" stroke="#075793" stroke-width="1.300"/></svg>
    <svg viewBox="0 0 24 24"><path d="M1 1h22v22H1z" fill="url(#gAsus)"/><path d="m4 17 5-10h2.200l-5 10zM8.500 17l5-10h2.200l-5 10zM13 17l5-10h2.500v10h-2.200v-6l-3 6z" fill="#e8e8ff"/></svg>
    <svg viewBox="0 0 24 24"><path d="M3 4v15q7 5 15 0V4z" fill="url(#gDb)" stroke="#6c7799"/><ellipse cx="10.500" cy="4" rx="7.500" ry="2.500" fill="#d8e1f3" stroke="#7580a2"/><path d="M3 9q7 4 15 0M3 14q7 4 15 0" fill="none" stroke="#6272a0" stroke-width="1.500"/><circle cx="17.500" cy="17" r="4.800" fill="#d91f28"/><circle cx="16.500" cy="15.500" r="1.800" fill="#ef989c"/></svg>
    <svg viewBox="0 0 24 24"><path d="M2 5q2 0 4 2 2-2 4-2 4-1 6-4 1 3 3 5 4 4 4 8c-1 12-20 12-21 0Q1 9 2 5z" fill="url(#gFox)"/><circle cx="12" cy="12" r="4.500" fill="#8b38d7"/><path d="M5 8q4-2 7 0-2 3-5 3 0 5 6 4-5 5-8-2z" fill="#ff7a21"/></svg>
    <span class="qapp"><svg viewBox="0 0 20 20"><use href="#qgis"/></svg></span>
  </div>
  <svg class="tray" viewBox="0 0 110 20"><path d="m4 13 5.500-5 5.500 5" fill="none" stroke="#333" stroke-width="1.200"/><path d="M25 14q-1-5 4-5 3-6 9 0l-2 6z" fill="#777" stroke="#444"/><circle cx="35.500" cy="13" r="4.300" fill="#f2d900"/><path d="M35.500 10.500v3m0 1v1" stroke="#222"/><path d="M51 8q7-7 14 0M53.500 10.500q4.500-4 9 0M55.500 12.800q2.500-2 5 0" fill="none" stroke="#333" stroke-width="1.200"/><circle cx="58" cy="15" r="1.200" fill="#333"/><path d="M73.500 8h2.500l3.500-3v11L76 13h-2.500zM82 7.500q2 3 0 6M84.500 5.500q3.500 5 0 10" fill="none" stroke="#333"/><rect x="95.500" y="6" width="12.500" height="9" rx="2" fill="none" stroke="#222" stroke-width="1.300"/><path d="M97 7.500h5v6h-5z" fill="#222"/><path d="M109 9v3" stroke="#222" stroke-width="2"/></svg>
  <div class="clock"><span>8:08 PM</span><span>9/26/2022</span></div>
  <span class="nine">9</span>
</div>
</body>
</html>
```

FILE: styles.css
```css
* { box-sizing: border-box; }
body { margin: 0; width: 1432px; height: 805px; overflow: hidden; background: #efefef; color: #1b1b1b; font: 11.5px/16px "Open Sans", "Noto Sans", sans-serif; display: flex; flex-direction: column; white-space: nowrap; }
svg { display: block; flex: none; overflow: visible; }
.defs { position: absolute; }
i, em, b { flex: none; }
.titlebar { height: 22px; flex: none; background: #fff; display: flex; align-items: center; }
.logo { width: 15px; height: 15px; margin-left: 2px; }
.title { margin-left: 3px; font-size: 11.3px; letter-spacing: -.46px; }
.winbtns { width: 108px; height: 16px; margin-left: auto; margin-right: 12px; }
.menu { height: 18px; flex: none; display: flex; align-items: center; padding: 1px 0 0 8px; font-size: 12px; letter-spacing: -.5px; border-bottom: 1px solid #d6d6d6; }
.menu span { flex: none; }
.menu u { text-underline-offset: 1px; }
.m1 { width: 46px; } .m2 { width: 30px; } .m3 { width: 35px; } .m4 { width: 37px; } .m5 { width: 51px; } .m6 { width: 46px; } .m7 { width: 43px; } .m8 { width: 42px; } .m9 { width: 57px; } .m10 { width: 34px; } .m11 { width: 37px; } .m12 { width: 64px; } .m13 { width: 40px; }
.toolbar { flex: none; display: flex; align-items: center; background: linear-gradient(#f9f9f9, #ededed); border-bottom: 1px solid #cfcfcf; }
.bar1 { height: 30px; }
.bar2 { height: 28px; }
.bar3 { height: 29px; }
.t { width: 24.65px; height: 19px; }
.up { height: 18.5px; }
.tw { position: relative; flex: none; width: 24.65px; }
.mark { position: absolute; left: -2px; top: -7px; width: 28px; height: 32px; border: 4px solid #e01f26; }
.on { height: 24px; padding: 2px 0; background: #dcdcdc; border: 1px solid #b5b5b5; border-radius: 2px; }
.off { opacity: .33; }
.d { width: 8px; height: 5px; margin: 0 1.75px; color: #555; }
.mid { margin: 0 1.250px; color: #999; }
.grip { height: 14px; background: radial-gradient(circle, #bbb .6px, transparent .9px) center/3px 3px content-box; padding: 0 3px; background-origin: content-box; background-clip: content-box; }
.g10 { width: 10px; } .g11 { width: 10.700px; } .g12 { width: 12.400px; } .g13 { width: 13.200px; } .g14 { width: 14.500px; }
.sep { width: 1px; height: 16px; background: #d6d6d6; margin: 0 2.700px; }
.abc { font: bold 6.500px "DejaVu Sans", sans-serif; fill: #333; letter-spacing: -.4px; }
.red { fill: #d3232d; }
.smalla { font: 9px "DejaVu Sans", sans-serif; fill: #333; }
.tiny { font: bold 6px "DejaVu Sans", sans-serif; }
.info { font: italic bold 12px "Liberation Serif", serif; fill: #fff; }
.help { font: 11px "Liberation Serif", serif; fill: #fff; }

.work { height: 610px; flex: none; display: flex; }
.layers { width: 193px; flex: none; display: flex; flex-direction: column; }
.dockhead { height: 15px; flex: none; display: flex; align-items: center; padding-left: 3px; font-size: 12px; letter-spacing: -.4px; padding-top: 1px; }
.dockbtns { width: 20px; height: 9px; margin-left: auto; }
.ltools { height: 23px; flex: none; display: flex; align-items: center; padding-left: 5px; gap: 5px; }
.ltools svg { width: 14px; height: 14px; }
.ltools .lc { width: 8px; height: 5px; color: #555; margin: 0 -1px 0 -2px; }
.ltools .nr { margin-right: -1px; }
.treebox { height: 559px; flex: none; display: flex; border-left: 1px solid #bbb; border-top: 1px solid #bbb; background: #fff; }
.tree { width: 179px; flex: none; overflow: hidden; }
.r { height: 16.410px; display: flex; align-items: center; position: relative; }
.l2 { padding-left: 57px; }
.l1 { padding-left: 20.500px; }
.l0 { padding-left: 2px; }
.ar { width: 18px; height: 8px; display: flex; align-items: center; justify-content: center; padding-right: 4px; }
.open::after { content: ""; border: 4px solid transparent; border-top: 4.500px solid #555; border-bottom: 0; }
.shut::after { content: ""; border: 4px solid transparent; border-left: 4.500px solid #555; border-right: 0; }
.cb { width: 13px; height: 13px; border: 1px solid #bcbcbc; background: #fff; color: #000; display: block; }
.cb svg { width: 13px; height: 13px; margin: -1px; }
.cb.g { color: #666; }
.ic { width: 16px; height: 14px; margin: 0 3.500px 0 4px; display: flex; align-items: center; justify-content: center; }
.sw { width: 14px; height: 14px; }
.pale { background: #f2f6f9; border: 1px solid #e2e7ea; }
.ln { width: 14px; height: 2px; }
.ds { width: 14px; height: 2px; background: repeating-linear-gradient(90deg, currentColor 0 4px, transparent 4px 5px); opacity: .9; }
.po { width: 16px; height: 12px; }
.gr { width: 14px; height: 14px; }
.r em { font: italic bold 11.350px/16px "Open Sans", "Noto Sans", sans-serif; color: #727272; }
.r span { font-size: 11.500px; letter-spacing: -.32px; }
.fu { position: absolute; left: 159px; top: 1px; width: 14px; height: 14px; }
.hl { position: absolute; left: 15.500px; top: -1.500px; width: 164px; height: 19px; border: 4px solid #e01f26; }
.vs { width: 13px; flex: none; display: flex; flex-direction: column; border-left: 1px solid #c8c8c8; background: #f8f8f8; }
.cap { height: 12px; display: flex; align-items: center; justify-content: center; }
.cap svg { width: 8px; height: 5px; color: #555; }
.vthumb { height: 392px; background: #e5e5e5; border: solid #ccc; border-width: 1px 0; }
.vtrack { flex: 1; }
.hs { height: 13px; flex: none; border: 1px solid #c3c3c3; display: flex; align-items: center; background: #eaeaea; }
.hs svg { width: 5px; height: 8px; margin: 0 4px; }
.ht { width: 71px; height: 11px; background: #f8f8f8; border-right: 1px solid #bbb; }
.hthumb { width: 82px; height: 11px; background: #e8e8e8; border-right: 1px solid #bbb; }
.corner { flex: 1; height: 11px; border-left: 1px solid #c3c3c3; background: #f3f3f3; }
.split { width: 6px; flex: none; display: flex; align-items: center; border-right: 1px solid #c8c8c8; }
.split i { width: 3px; height: 14px; margin-left: 1px; background: radial-gradient(circle, #bbb .5px, transparent .9px) 0 0/3px 3px; }
.canvas { width: 1029px; flex: none; display: flex; flex-direction: column; background: #e1e1e1; border-bottom: 1px solid #d0d0d0; }
.msg { height: 27px; flex: none; background: #ffc800; display: flex; align-items: center; font: 10px/14px "DejaVu Sans Condensed", "DejaVu Sans", sans-serif; padding: 2px 9px 0 8px; }
.warn { width: 18px; height: 16px; }
.mt { margin-left: 8px; letter-spacing: -.3px; }
.mt b { letter-spacing: -.15px; }
.show { margin-left: auto; width: 61px; height: 24px; margin-bottom: 1px; background: #fff; text-decoration: underline; letter-spacing: -.1px; display: flex; align-items: center; justify-content: center; }
.more { margin-left: 6px; width: 52px; font-style: italic; letter-spacing: -.2px; }
.mx { width: 24px; height: 16px; }
.map { flex: 1; position: relative; }
.indo { position: absolute; left: 493.500px; top: 270px; font: bold 13.500px/16px "Noto Sans", sans-serif; letter-spacing: .45px; color: #666; }
.peka { position: absolute; left: 562.500px; top: 335px; font: 15.800px/20px "Noto Sans", sans-serif; letter-spacing: -.35px; color: #000; }
.s2 { width: 6px; border: 0; border-left: 1px solid #c8c8c8; }
.qms { flex: 1; display: flex; flex-direction: column; font-family: "DejaVu Sans Condensed", "DejaVu Sans", sans-serif; font-size: 10px; }
.qms .dockhead { font-family: "Open Sans", sans-serif; }
.inp { height: 19px; border: 1px solid #b5b5b5; border-radius: 2px; background: #fff; color: #858585; padding-left: 2px; line-height: 17px; letter-spacing: -.1px; }
.frow { height: 27px; display: flex; justify-content: flex-end; gap: 4px; padding-top: 4px; padding-right: 1px; }
.btn { width: 71px; height: 19px; border: 1px solid #b0b0b0; border-radius: 2px; background: #f9f9f9; line-height: 19px; display: flex; justify-content: center; color: #000; font-size: 10px; letter-spacing: -.25px; }
.combo { width: 55px; height: 18px; border: 1px solid #b5b5b5; border-radius: 2px; background: linear-gradient(#fafafa, #ececec); display: flex; justify-content: space-between; align-items: center; padding: 0 6px 0 3px; }
.combo svg { width: 8px; height: 5px; color: #555; }
.list { height: 518px; flex: none; background: #fff; border: 1px solid #bbb; }
.news { height: 25px; margin-top: 3px; border: 1px solid #c8c8c8; display: flex; align-items: center; gap: 4px; padding: 2px 0 0 25px; color: #222; font-size: 10px; letter-spacing: -.19px; }
.news svg { width: 10px; height: 10px; }
.news u { color: #1616e0; }

.status { height: 23px; flex: none; display: flex; align-items: center; font: 10px/16px "DejaVu Sans Condensed", "DejaVu Sans", sans-serif; letter-spacing: -.25px; }
.status > span { flex: none; }
.loc { width: 173px; height: 19px; flex: none; margin-left: 3px; border: 1px solid #b0b0b0; border-radius: 2px; background: #fff; display: flex; align-items: center; gap: 5px; padding-left: 7px; color: #757575; }
.loc svg { width: 12px; height: 12px; }
.s-coord { width: 48px; margin-left: 579px; }
.box { height: 18px; border: 1px solid #b0b0b0; border-radius: 2px; background: #fff; display: flex; align-items: center; justify-content: space-between; flex: none; color: #111; }
.b-coord { width: 87px; padding-left: 6px; letter-spacing: -.3px; }
.bug { width: 16px; height: 16px; margin-left: 3px; }
.s-scale { width: 25px; margin-left: 9px; }
.b-scale { width: 70px; padding: 0 6px 0 2px; }
.b-scale svg { width: 8px; height: 5px; color: #555; }
.lock { width: 12px; height: 15px; margin-left: 9px; }
.s-mag { width: 42px; margin-left: 6px; }
.b-mag { width: 70px; padding-left: 3px; }
.spin { width: 13px; height: 16px; border-left: 1px solid #bbb; display: flex; align-items: center; justify-content: center; }
.spin svg { width: 8px; height: 12px; }
.s-rot { width: 42px; margin-left: 6px; }
.b-rot { width: 67px; padding-left: 3px; }
.rend { margin-left: 4px; }
.s-rend { width: 43px; margin-left: 4px; }
.crs { width: 14px; height: 14px; }
.s-epsg { width: 66px; margin-left: 1px; }
.chat { width: 16px; height: 16px; }

.taskbar { flex: none; height: 45px; display: flex; align-items: center; background: linear-gradient(90deg, #d5e1f2 0, #dbe2ef 180px, #f0e0e2 440px, #f5e0df 800px, #efdce6 1000px, #eadcf0 1080px, #d6e3f1 1160px, #cbe6f3 1432px); color: #222; }
.moon { width: 22px; height: 22px; margin-left: 18px; }
.wx { margin-left: 8px; width: 91px; display: flex; flex-direction: column; line-height: 15px; font-size: 11px; }
.wc { color: #555; }
.apps { margin-left: 381px; display: flex; align-items: center; gap: 17.100px; }
.apps > svg { width: 24px; height: 24px; }
.qapp { position: relative; width: 33px; height: 35px; margin-left: -4px; margin-right: -4px; background: rgba(255,255,255,.6); border-radius: 4px; display: flex; align-items: center; justify-content: center; }
.qapp svg { width: 22px; height: 22px; }
.qapp::after { content: ""; position: absolute; left: 9px; bottom: 0; width: 15px; height: 3px; border-radius: 2px; background: #1673c5; }
.qapp::before { content: ""; position: absolute; left: -28px; bottom: 0; width: 6px; height: 3px; border-radius: 2px; background: #888; }
.tray { width: 110px; height: 20px; margin-left: auto; }
.clock { width: 66px; display: flex; flex-direction: column; align-items: flex-end; font-size: 11px; line-height: 15px; letter-spacing: -.15px; }
.nine { width: 15px; height: 15px; margin: 0 19px 0 7px; border-radius: 50%; background: #0d74cc; color: #fff; font-size: 9px; line-height: 15px; text-align: center; }
```
